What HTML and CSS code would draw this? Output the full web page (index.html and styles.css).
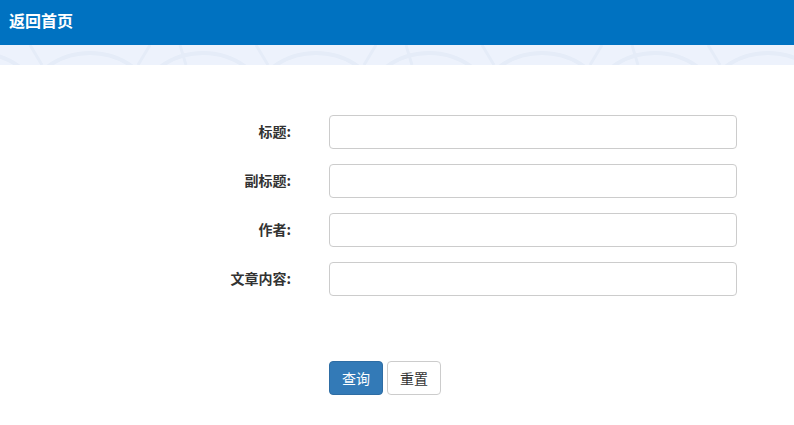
FILE: index.html
```html
<!DOCTYPE html>
<html lang="zh">
<head>
<meta charset="utf-8">
<title>返回首页</title>
<link rel="stylesheet" href="styles.css">
</head>
<body>
<header class="topbar"><a class="home" href="#">返回首页</a></header>
<div class="band">
  <svg class="band-art" width="100%" height="20" preserveAspectRatio="none">
    <defs>
      <pattern id="p" width="226" height="20" patternUnits="userSpaceOnUse">
        <g fill="none" stroke="#e5ecf8" stroke-width="4">
          <circle cx="90" cy="80" r="72"/>
          <circle cx="203" cy="80" r="72"/>
          <circle cx="-23" cy="80" r="72"/>
        </g>
        <g stroke="#e5ecf8" stroke-width="3">
          <line x1="30" y1="0" x2="42" y2="20"/>
          <line x1="150" y1="0" x2="138" y2="20"/>
          <line x1="180" y1="0" x2="186" y2="20"/>
        </g>
      </pattern>
    </defs>
    <rect width="100%" height="20" fill="url(#p)"/>
  </svg>
</div>
<main class="content">
  <form class="form">
    <div class="row"><label class="lbl">标题:</label><input class="field" type="text"></div>
    <div class="row"><label class="lbl">副标题:</label><input class="field" type="text"></div>
    <div class="row"><label class="lbl">作者:</label><input class="field" type="text"></div>
    <div class="row"><label class="lbl">文章内容:</label><input class="field" type="text"></div>
    <div class="actions">
      <button type="button" class="btn btn-primary">查询</button>
      <button type="reset" class="btn btn-default">重置</button>
    </div>
  </form>
</main>
</body>
</html>
```
FILE: styles.css
```css
html, body {
  margin: 0;
  padding: 0;
  background: #fff;
  font-family: "Microsoft YaHei", "Noto Sans CJK SC", "Liberation Sans", sans-serif;
  font-size: 13px;
  color: #333;
}
.topbar {
  height: 45px;
  background: #0072c1;
  display: flex;
  align-items: center;
  padding-left: 9px;
}
.home {
  color: #fff;
  font-weight: bold;
  font-size: 16px;
  text-decoration: none;
  line-height: 1;
  margin-top: -6px;
}
.band {
  height: 20px;
  background: #edf2fc;
}
.band-art {
  display: block;
}
.content {
  padding-top: 50px;
}
.form {
  display: flex;
  flex-direction: column;
  gap: 15px;
}
.row {
  display: flex;
  align-items: center;
}
.lbl {
  flex: 0 0 329px;
  text-align: right;
  font-weight: bold;
  font-size: 14px;
  color: #333;
  padding-right: 38px;
  box-sizing: border-box;
  margin-top: -2px;
}
.field {
  width: 408px;
  height: 34px;
  box-sizing: border-box;
  border: 1px solid #ccc;
  border-radius: 4px;
  padding: 6px 12px;
  font-size: 14px;
  outline: none;
}
.actions {
  display: flex;
  gap: 4px;
  padding-left: 329px;
  margin-top: 50px;
}
.btn {
  height: 34px;
  padding: 0 12px;
  font-size: 14px;
  font-family: inherit;
  border-radius: 4px;
  border: 1px solid;
  cursor: pointer;
}
.btn-primary {
  width: 54px;
  background: #337ab7;
  border-color: #2e6da4;
  color: #fff;
}
.btn-default {
  width: 54px;
  background: #fff;
  border-color: #ccc;
  color: #333;
}
```
